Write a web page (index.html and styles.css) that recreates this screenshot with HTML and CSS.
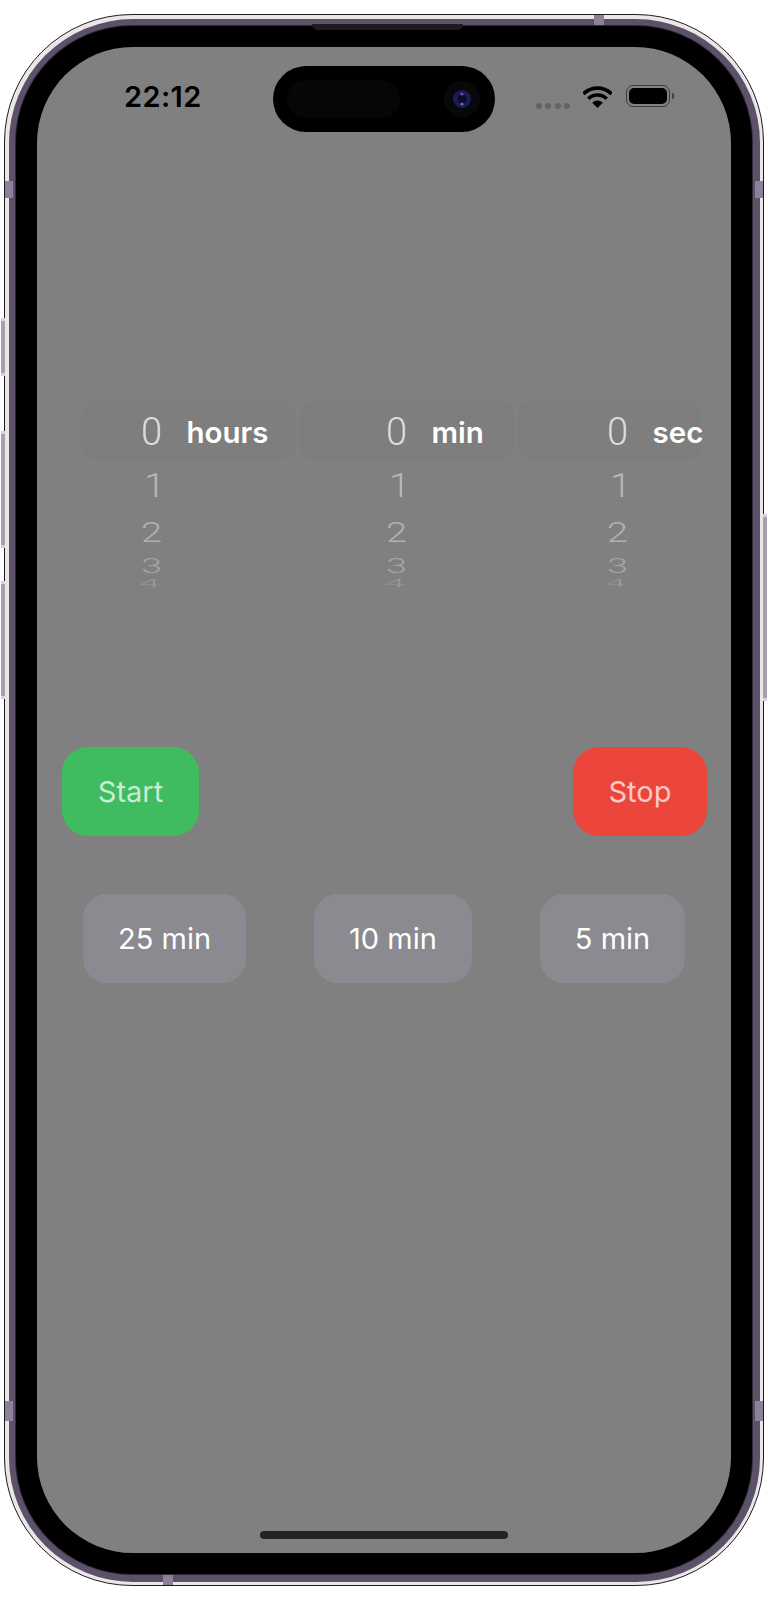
FILE: index.html
```html
<!DOCTYPE html>
<html lang="en">
<head>
<meta charset="utf-8">
<title>Timer</title>
<link rel="stylesheet" href="styles.css">
</head>
<body>
<div class="device">
  <span class="side side-l1"></span>
  <span class="side side-l2"></span>
  <span class="side side-l3"></span>
  <span class="side side-r1"></span>
  <span class="antenna ant-left-top"></span>
  <span class="antenna ant-right-top"></span>
  <span class="antenna ant-left-bottom"></span>
  <span class="antenna ant-right-bottom"></span>
  <span class="antenna ant-top"></span>
  <span class="antenna ant-bottom"></span>
  <div class="band">
    <div class="bezel">
      <span class="speaker"></span>
      <main class="screen">
        <div class="island">
          <span class="island-blob"></span>
          <svg class="camera" viewBox="0 0 36 36" aria-hidden="true">
            <circle cx="18" cy="18" r="18" fill="#08080a"/>
            <circle cx="18" cy="18" r="9" fill="#1b1b55"/>
            <circle cx="18" cy="18" r="4.5" fill="#0c0c24"/>
            <circle cx="18" cy="13" r="1.6" fill="#5a58a8"/>
            <circle cx="18" cy="23" r="1.6" fill="#6a68b8"/>
          </svg>
        </div>
        <header class="status">
          <span class="time">22:12</span>
          <div class="status-right">
            <div class="signal"><i></i><i></i><i></i><i></i></div>
            <svg class="wifi" viewBox="0 0 29 23" aria-hidden="true">
              <path d="M0.4 8.9A20 20 0 0 1 28.6 8.9" fill="none" stroke="#000" stroke-width="3.6"/>
              <path d="M5.3 13.8A13 13 0 0 1 23.7 13.8" fill="none" stroke="#000" stroke-width="3.6"/>
              <path d="M14.5 23L9.2 17.7A7.5 7.5 0 0 1 19.8 17.7Z" fill="#000"/>
            </svg>
            <div class="battery"><span class="battery-fill"></span></div>
            <span class="battery-cap"></span>
          </div>
        </header>

        <section class="pickers">
          <div class="wheel wheel-hours">
            <div class="row row-selected"><span class="cell"><span class="num n0">0</span></span><span class="unit">hours</span></div>
            <div class="row row-1"><span class="cell"><span class="num n1">1</span></span></div>
            <div class="row row-2"><span class="cell"><span class="num n2">2</span></span></div>
            <div class="row row-3"><span class="cell"><span class="num n3">3</span></span></div>
            <div class="row row-4"><span class="cell"><span class="num n4">4</span></span></div>
          </div>
          <div class="wheel wheel-min">
            <div class="row row-selected"><span class="cell"><span class="num n0">0</span></span><span class="unit">min</span></div>
            <div class="row row-1"><span class="cell"><span class="num n1">1</span></span></div>
            <div class="row row-2"><span class="cell"><span class="num n2">2</span></span></div>
            <div class="row row-3"><span class="cell"><span class="num n3">3</span></span></div>
            <div class="row row-4"><span class="cell"><span class="num n4">4</span></span></div>
          </div>
          <div class="wheel wheel-sec">
            <div class="row row-selected"><span class="cell"><span class="num n0">0</span></span><span class="unit">sec</span></div>
            <div class="row row-1"><span class="cell"><span class="num n1">1</span></span></div>
            <div class="row row-2"><span class="cell"><span class="num n2">2</span></span></div>
            <div class="row row-3"><span class="cell"><span class="num n3">3</span></span></div>
            <div class="row row-4"><span class="cell"><span class="num n4">4</span></span></div>
          </div>
        </section>

        <div class="controls">
          <button class="btn btn-start">Start</button>
          <button class="btn btn-stop">Stop</button>
        </div>

        <div class="presets">
          <button class="btn preset">25 min</button>
          <button class="btn preset">10 min</button>
          <button class="btn preset">5 min</button>
        </div>

        <span class="home"></span>
      </main>
    </div>
  </div>
</div>
</body>
</html>
```
FILE: styles.css
```css
* { box-sizing: border-box; }
html, body { margin: 0; height: 1600px; background: #fff; overflow: hidden; }
body { font-family: Inter, "Liberation Sans", sans-serif; }

.device {
  position: relative;
  width: 760px;
  height: 1572px;
  margin: 14px 0 0 4px;
  padding: 3.5px;
  border: 1px solid #1e1a22;
  border-radius: 128px;
  background: #ece7e7;
}
.band {
  height: 100%;
  padding: 7.5px;
  border-radius: 124px;
  background: #5b5169;
}
.bezel {
  position: relative;
  height: 100%;
  padding: 21px;
  border-radius: 116px;
  background: #000;
  box-shadow: 0 0 0 1px #2f2a36;
}
.screen {
  position: relative;
  display: flex;
  flex-direction: column;
  height: 100%;
  border-radius: 96px;
  background: #808080;
  overflow: hidden;
}

.side { position: absolute; width: 4px; background: #a89fb0; border-top: 3px solid #d8d2da; border-bottom: 3px solid #d8d2da; }
.side-l1 { left: -4px; top: 303px; height: 58px; }
.side-l2 { left: -4px; top: 416px; height: 117px; }
.side-l3 { left: -4px; top: 566px; height: 118px; }
.side-r1 { right: -4px; top: 499px; height: 187px; }

.antenna { position: absolute; background: #8b8199; }
.ant-left-top { left: 0; top: 166px; width: 8px; height: 17px; }
.ant-right-top { right: 0; top: 166px; width: 8px; height: 17px; }
.ant-left-bottom { left: 0; top: 1386px; width: 8px; height: 20px; }
.ant-right-bottom { right: 0; top: 1386px; width: 8px; height: 20px; }
.ant-top { left: 589px; top: 0; width: 10px; height: 10px; }
.ant-bottom { left: 158px; bottom: 0; width: 10px; height: 10px; }

.speaker {
  position: absolute;
  left: 296px;
  top: -2px;
  width: 151px;
  height: 6px;
  border-radius: 0 0 6px 6px;
  background: #1c1c1c;
}

.island {
  position: absolute;
  left: 236px;
  top: 19px;
  display: flex;
  align-items: center;
  width: 222px;
  height: 66px;
  padding-left: 14px;
  border-radius: 33px;
  background: #000;
}
.island-blob { width: 113px; height: 38px; border-radius: 19px; background: #060606; }
.camera { width: 36px; height: 36px; margin-left: 44px; }

.status {
  display: flex;
  flex: none;
  align-items: center;
  justify-content: space-between;
  height: 99px;
  margin-bottom: 1px;
  padding: 0 57px 0 87px;
}
.time { font-size: 29px; font-weight: 600; line-height: 1; letter-spacing: 0.4px; color: #000; }
.status-right { display: flex; align-items: center; }
.signal { display: flex; gap: 3.5px; margin-top: 18px; margin-right: 13px; }
.signal i { width: 6px; height: 6px; border-radius: 50%; background: #636363; }
.wifi { width: 29px; height: 23px; margin-right: 14px; }
.battery {
  width: 44px;
  height: 22px;
  padding: 2px;
  border: 1px solid #3c3c3c;
  border-radius: 7px;
  margin-top: -1px;
}
.battery-fill { display: block; height: 100%; border-radius: 5px; background: #000; }
.battery-cap { width: 2px; height: 6px; margin-left: 2px; margin-top: -1px; border-radius: 0 2px 2px 0; background: #3c3c3c; }

.pickers {
  display: grid;
  grid-template-columns: 218px 218px 187px;
  margin: 255px 0 0 45px;
  height: 185px;
  overflow: hidden;
}
.wheel { display: flex; flex-direction: column; }
.row { display: flex; align-items: center; overflow: hidden; }
.row-selected { height: 58px; flex: none; margin-right: 4px; border-radius: 12px; background: #7e7e7e; overflow: visible; }
.row-1 { height: 50px; flex: none; }
.row-2 { height: 44px; flex: none; }
.row-3 { height: 24px; flex: none; }
.row-4 { height: 9px; flex: none; align-items: flex-start; }
.cell { display: block; flex: none; text-align: right; }
.wheel-hours .cell { width: 80px; }
.wheel-min .cell { width: 107px; }
.wheel-sec .cell { width: 110px; }
.num {
  display: inline-block;
  font-family: Roboto, "Liberation Sans", sans-serif;
  font-weight: 300;
  font-size: 38px;
  line-height: 1;
  transform-origin: 100% 50%;
}
.n0 { color: #dedede; transform: translateY(1px); }
.n1 { color: #b8b8b8; transform: translate(3px, 1px) scale(1, 0.88); }
.n2 { color: #b0b0b0; transform: scale(1, 0.74); }
.n3 { color: #a4a4a4; transform: scale(1, 0.52); }
.n4 { color: #989898; transform: translate(-2px, -14px) scale(1, 0.3); }
.unit {
  margin-left: 24.5px;
  font-size: 29.5px;
  font-weight: 600;
  line-height: 1;
  color: #fff;
  transform: translateY(1.5px);
}

.btn {
  display: flex;
  align-items: center;
  justify-content: center;
  height: 89px;
  border: 0;
  font-family: inherit;
  font-size: 29px;
  font-weight: 400;
}
.controls {
  display: flex;
  flex: none;
  justify-content: space-between;
  margin-top: 160px;
  padding: 0 24px 0 25px;
}
.btn-start { width: 137px; border-radius: 26px; background: #40bc60; color: rgba(255,255,255,0.72); }
.btn-stop { width: 134px; border-radius: 26px; background: #ec453c; color: rgba(255,255,255,0.72); }
.presets {
  display: flex;
  flex: none;
  gap: 68px;
  margin-top: 58px;
  padding-left: 46px;
}
.preset { border-radius: 24px; background: #8b8a90; color: #fff; padding: 0 35px; }

.home {
  flex: none;
  align-self: center;
  width: 248px;
  height: 8px;
  margin-top: auto;
  margin-bottom: 14px;
  border-radius: 4px;
  background: #242424;
}
```
